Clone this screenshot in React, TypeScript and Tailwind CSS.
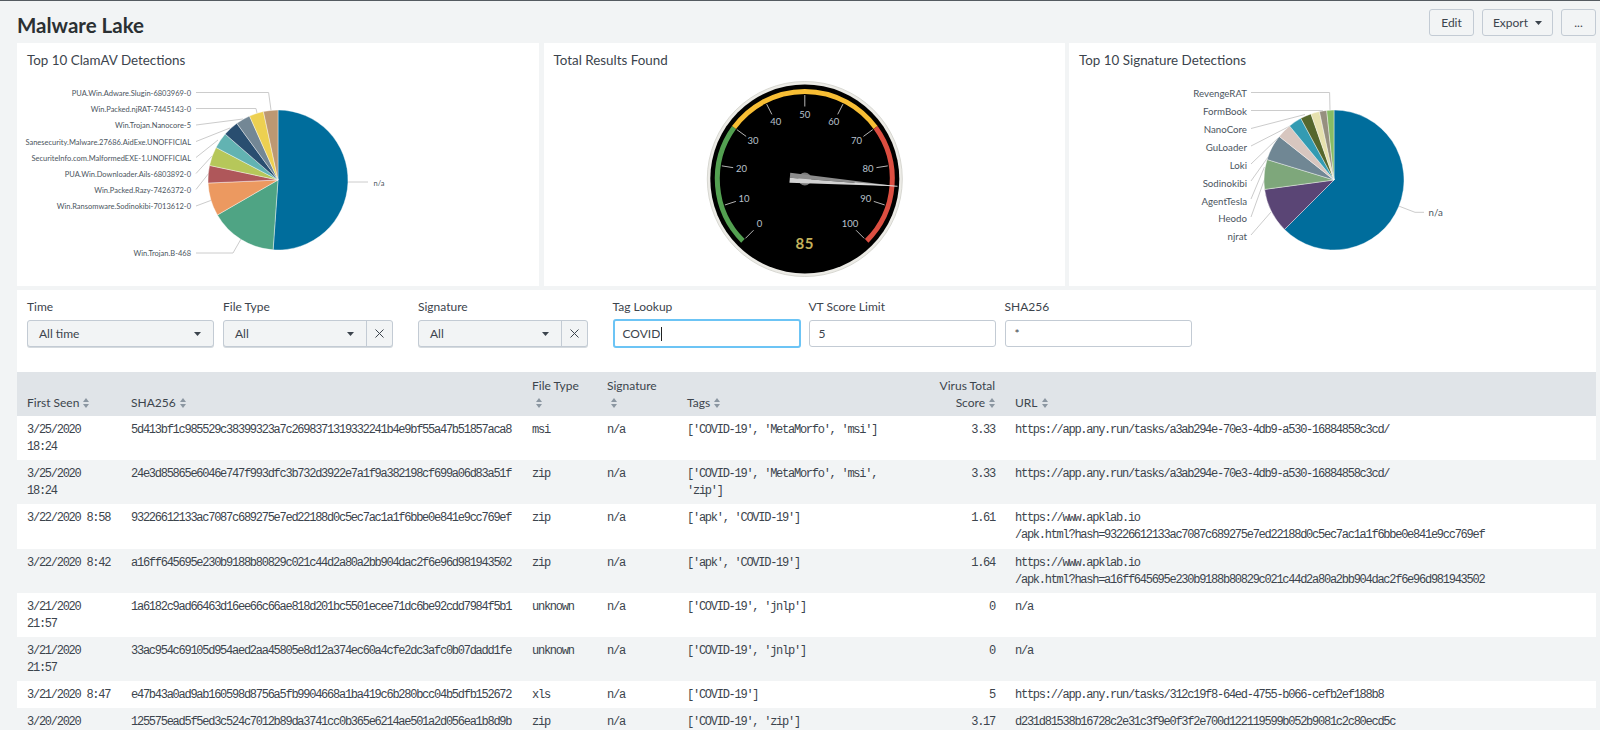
import { X } from "lucide-react";

const clamSlices = [
    { to: 184, color: "#006d9c" },
    { to: 240, color: "#4fa484" },
    { to: 267.5, color: "#ec9960" },
    { to: 282, color: "#af575a" },
    { to: 297.7, color: "#b6c75a" },
    { to: 311, color: "#62b3b2" },
    { to: 324, color: "#294e70" },
    { to: 336, color: "#738795" },
    { to: 348, color: "#edd051" },
    { to: 360, color: "#bd9872" },
];

const clamLabels = [
    { text: "PUA.Win.Adware.Slugin-6803969-0", y: 93, line: "196,92.5 268.6,92.5 271,110" },
    { text: "Win.Packed.njRAT-7445143-0", y: 109, line: "196,108.5 256,108.5 257,113" },
    { text: "Win.Trojan.Nanocore-5", y: 125.5, line: "196,125 243,119" },
    { text: "Sanesecurity.Malware.27686.AidExe.UNOFFICIAL", y: 142, line: "196,141.5 230,128" },
    { text: "SecuriteInfo.com.MalformedEXE-1.UNOFFICIAL", y: 158, line: "196,157.5 218,140" },
    { text: "PUA.Win.Downloader.Ails-6803892-0", y: 174, line: "196,173.5 212,156" },
    { text: "Win.Packed.Razy-7426372-0", y: 190, line: "196,189.5 209,173" },
    { text: "Win.Ransomware.Sodinokibi-7013612-0", y: 206.5, line: "196,206 212,200" },
    { text: "Win.Trojan.B-468", y: 253.5, line: "196,253 233,253 241,239" },
];

const sigSlices = [
    { to: 225, color: "#006d9c" },
    { to: 262.3, color: "#5a4575" },
    { to: 287, color: "#7ea77b" },
    { to: 308.5, color: "#708794" },
    { to: 320.6, color: "#d7c6bf" },
    { to: 331.7, color: "#339bb2" },
    { to: 340.8, color: "#55672d" },
    { to: 348, color: "#e6e1ae" },
    { to: 354, color: "#96907f" },
    { to: 360, color: "#87bc65" },
];

const sigLabels = [
    { text: "RevengeRAT", y: 93.5, line: "1251,92.5 1329.6,92.5 1330,110" },
    { text: "FormBook", y: 112, line: "1251,110.5 1323,110.5" },
    { text: "NanoCore", y: 130, line: "1251,128.5 1305,114.5" },
    { text: "GuLoader", y: 148, line: "1251,146 1290,126" },
    { text: "Loki", y: 165.5, line: "1251,164 1278,138" },
    { text: "Sodinokibi", y: 183.5, line: "1251,181 1269.5,155" },
    { text: "AgentTesla", y: 201.5, line: "1251,199 1264.5,167" },
    { text: "Heodo", y: 219, line: "1251,217 1265,178" },
    { text: "njrat", y: 237, line: "1251,235 1271,212" },
];

const rows = [
    ["3/25/2020 18:24", "5d413bf1c985529c38399323a7c2698371319332241b4e9bf55a47b51857aca8", "msi", "n/a", "['COVID-19', 'MetaMorfo', 'msi']", "3.33", ["https://app.any.run/tasks/a3ab294e-70e3-4db9-a530-16884858c3cd/"]],
    ["3/25/2020 18:24", "24e3d85865e6046e747f993dfc3b732d3922e7a1f9a382198cf699a06d83a51f", "zip", "n/a", "['COVID-19', 'MetaMorfo', 'msi', 'zip']", "3.33", ["https://app.any.run/tasks/a3ab294e-70e3-4db9-a530-16884858c3cd/"]],
    ["3/22/2020 8:58", "93226612133ac7087c689275e7ed22188d0c5ec7ac1a1f6bbe0e841e9cc769ef", "zip", "n/a", "['apk', 'COVID-19']", "1.61", ["https://www.apklab.io", "/apk.html?hash=93226612133ac7087c689275e7ed22188d0c5ec7ac1a1f6bbe0e841e9cc769ef"]],
    ["3/22/2020 8:42", "a16ff645695e230b9188b80829c021c44d2a80a2bb904dac2f6e96d981943502", "zip", "n/a", "['apk', 'COVID-19']", "1.64", ["https://www.apklab.io", "/apk.html?hash=a16ff645695e230b9188b80829c021c44d2a80a2bb904dac2f6e96d981943502"]],
    ["3/21/2020 21:57", "1a6182c9ad66463d16ee66c66ae818d201bc5501ecee71dc6be92cdd7984f5b1", "unknown", "n/a", "['COVID-19', 'jnlp']", "0", ["n/a"]],
    ["3/21/2020 21:57", "33ac954c69105d954aed2aa45805e8d12a374ec60a4cfe2dc3afc0b07dadd1fe", "unknown", "n/a", "['COVID-19', 'jnlp']", "0", ["n/a"]],
    ["3/21/2020 8:47", "e47b43a0ad9ab160598d8756a5fb9904668a1ba419c6b280bcc04b5dfb152672", "xls", "n/a", "['COVID-19']", "5", ["https://app.any.run/tasks/312c19f8-64ed-4755-b066-cefb2ef188b8"]],
    ["3/20/2020", "125575ead5f5ed3c524c7012b89da3741cc0b365e6214ae501a2d056ea1b8d9b", "zip", "n/a", "['COVID-19', 'zip']", "3.17", ["d231d81538b16728c2e31c3f9e0f3f2e700d122119599b052b9081c2c80ecd5c"]],
] as const;

// degrees clockwise from 12 o'clock
const polar = (cx: number, cy: number, r: number, deg: number) => {
    const a = (deg * Math.PI) / 180;
    return [cx + r * Math.sin(a), cy - r * Math.cos(a)];
};

const arc = (cx: number, cy: number, r: number, from: number, to: number) => {
    const [x1, y1] = polar(cx, cy, r, from);
    const [x2, y2] = polar(cx, cy, r, to);
    return `M${x1} ${y1}A${r} ${r} 0 ${to - from > 180 ? 1 : 0} 1 ${x2} ${y2}`;
};

function Pie({ cx, cy, r, slices }: { cx: number; cy: number; r: number; slices: { to: number; color: string }[] }) {
    let from = 0;
    return (
        <>
            {slices.map(s => {
                const d = `M${cx} ${cy}L${arc(cx, cy, r, from, s.to).slice(1)}Z`;
                from = s.to;
                return <path key={s.color} d={d} fill={s.color} stroke="#fff" strokeWidth="0.4" />;
            })}
        </>
    );
}

function Labels({ items, x, size }: { items: { text: string; y: number; line: string }[]; x: number; size: number }) {
    return (
        <>
            {items.map(l => (
                <g key={l.text}>
                    <polyline points={l.line} fill="none" stroke="#cccccc" strokeWidth="1" />
                    <text x={x} y={l.y + 0.8} fontSize={size} fill="#4b5560" textAnchor="end" dominantBaseline="middle">
                        {l.text}
                    </text>
                </g>
            ))}
        </>
    );
}

function Gauge() {
    const cx = 804.8;
    const cy = 179;
    const values = [0, 10, 20, 30, 40, 50, 60, 70, 80, 90, 100];
    const toDeg = (v: number) => -135 + v * 2.7;
    return (
        <>
            <circle cx={cx} cy={cy} r="97.5" fill="#ecebe6" stroke="#d8d8d2" strokeWidth="1" />
            <circle cx={cx} cy={cy} r="94.5" fill="#000" />
            <path d={arc(cx, cy, 87.5, toDeg(0), toDeg(30))} fill="none" stroke="#53a051" strokeWidth="5" />
            <path d={arc(cx, cy, 87.5, toDeg(30), toDeg(70))} fill="none" stroke="#f8be34" strokeWidth="5" />
            <path d={arc(cx, cy, 87.5, toDeg(70), toDeg(100))} fill="none" stroke="#dc4e41" strokeWidth="5" />
            {values.map(v => {
                const [x1, y1] = polar(cx, cy, 84, toDeg(v));
                const [x2, y2] = polar(cx, cy, 72.5, toDeg(v));
                const [tx, ty] = polar(cx, cy, 64, toDeg(v));
                return (
                    <g key={v}>
                        <line x1={x1} y1={y1} x2={x2} y2={y2} stroke="#b4b4b4" strokeWidth="1" />
                        <text x={tx} y={ty + 0.5} fontSize="9.5" fill="#b9c2cc" textAnchor="middle" dominantBaseline="middle">
                            {v}
                        </text>
                    </g>
                );
            })}
            <text x={cx} y={245.5} fontSize="15" fontWeight="700" letterSpacing="0.6" fill="#c4b25c" textAnchor="middle" dominantBaseline="middle">
                85
            </text>
            <circle cx={cx} cy={cy} r="6.5" fill="#7a7a7a" />
            <g transform={`rotate(94.5 ${cx} ${cy})`}>
                <polygon points={`${cx},${cy - 93} ${cx - 5},${cy + 15} ${cx},${cy + 15}`} fill="#8c8c8c" />
                <polygon points={`${cx},${cy - 93} ${cx},${cy + 15} ${cx + 5},${cy + 15}`} fill="#d2d2d2" />
                <line x1={cx} y1={cy - 93} x2={cx} y2={cy - 50} stroke="#eeeeee" strokeWidth="0.8" />
            </g>
        </>
    );
}

function Panel({ title, children }: { title: string; children: React.ReactNode }) {
    return (
        <div className="h-[243px] bg-white">
            <h3 className="h-[32px] pl-[10px] pt-[7px] text-[13.4px] leading-[20px] font-normal text-[#3c444d]">{title}</h3>
            {children}
        </div>
    );
}

function Caret() {
    return (
        <svg width="7" height="4" viewBox="0 0 7 4" className="shrink-0">
            <polygon points="0,0 7,0 3.5,4" fill="#3c444d" />
        </svg>
    );
}

function Select({ value, width, clearable }: { value: string; width: string; clearable?: boolean }) {
    return (
        <div className={`flex h-[27px] ${width} rounded-[3px] border border-[#c3cbd4] bg-[#f2f4f5] text-[12px] text-[#3c444d] shadow-[0_1px_0_#d5dade]`}>
            <div className="flex min-w-0 flex-1 items-center justify-between pl-[11px] pr-[12px]">
                <span>{value}</span>
                <Caret />
            </div>
            {clearable && (
                <div className="flex w-[26px] items-center justify-center border-l border-[#c3cbd4]">
                    <X size={15} strokeWidth={1.6} />
                </div>
            )}
        </div>
    );
}

function Field({ label, className, children }: { label: string; className: string; children: React.ReactNode }) {
    return (
        <div className={className}>
            <div className="mb-[5px] h-[16px] text-[12px] leading-[16px] text-[#3c444d]">{label}</div>
            {children}
        </div>
    );
}

function SortIcon() {
    return (
        <svg width="6" height="10" viewBox="0 0 6 10" className="ml-[4px] inline-block align-[-1px]">
            <polygon points="3,0 6,4 0,4" fill="#8b96a1" />
            <polygon points="0,6 6,6 3,10" fill="#8b96a1" />
        </svg>
    );
}

function Th({ className, children }: { className?: string; children: React.ReactNode }) {
    return <th className={`px-[10px] pb-[5px] align-bottom text-left text-[12px] leading-[17px] font-normal text-[#3c444d] ${className ?? ""}`}>{children}</th>;
}

export default function App() {
    return (
        <div className="h-[730px] overflow-hidden border-t border-[#555b61] bg-[#f2f4f5] pl-[17px] pr-[4px] font-['Lato',sans-serif]">
            <div className="flex h-[42px] items-start justify-between">
                <h1 className="pt-[10px] text-[20.5px] leading-[28px] font-bold text-[#2b3033]">Malware Lake</h1>
                <div className="flex gap-[8px] pt-[8px] text-[12px] text-[#3c444d]">
                    <button className="h-[27px] w-[45px] rounded-[3px] border border-[#c3cbd4] bg-[#f2f4f5]">Edit</button>
                    <button className="flex h-[27px] w-[71px] items-center justify-center gap-[7px] rounded-[3px] border border-[#c3cbd4] bg-[#f2f4f5]">
                        Export
                        <Caret />
                    </button>
                    <button className="h-[27px] w-[35px] rounded-[3px] border border-[#c3cbd4] bg-[#f2f4f5]">...</button>
                </div>
            </div>

            <div className="grid grid-cols-[522px_521px_527px] gap-x-[4.5px]">
                <Panel title="Top 10 ClamAV Detections">
                    <svg width="522" height="211" viewBox="17 75 522 211" className="block">
                        <Labels items={clamLabels} x={191} size={7.5} />
                        <polyline points="348,182 368,182" fill="none" stroke="#cccccc" strokeWidth="1" />
                        <text x="373.5" y="184.5" fontSize="7.5" fill="#4b5560" dominantBaseline="middle">n/a</text>
                        <Pie cx={278} cy={180} r={70} slices={clamSlices} />
                    </svg>
                </Panel>
                <Panel title="Total Results Found">
                    <svg width="521" height="211" viewBox="544 75 521 211" className="block">
                        <Gauge />
                    </svg>
                </Panel>
                <Panel title="Top 10 Signature Detections">
                    <svg width="527" height="211" viewBox="1069 75 527 211" className="block">
                        <Labels items={sigLabels} x={1247} size={9.7} />
                        <polyline points="1398.6,206 1415,212.3 1424,212.3" fill="none" stroke="#cccccc" strokeWidth="1" />
                        <text x="1428.5" y="214" fontSize="9.7" fill="#4b5560" dominantBaseline="middle">n/a</text>
                        <Pie cx={1334} cy={180} r={70} slices={sigSlices} />
                    </svg>
                </Panel>
            </div>

            <div className="mt-[4px] flex h-[82px] bg-white pl-[10px] pt-[9px]">
                <Field label="Time" className="w-[187px]">
                    <Select value="All time" width="w-[187px]" />
                </Field>
                <Field label="File Type" className="ml-[9px] w-[170px]">
                    <Select value="All" width="w-[170px]" clearable />
                </Field>
                <Field label="Signature" className="ml-[25px] w-[170px]">
                    <Select value="All" width="w-[170px]" clearable />
                </Field>
                <Field label="Tag Lookup" className="ml-[24.5px] w-[188px]">
                    <div className="-mt-px flex h-[29px] items-center rounded-[3px] border-2 border-[#6cc4f5] bg-white pl-[8px] text-[12px] text-[#3c444d]">
                        COVID
                        <span className="ml-px h-[14px] w-px bg-[#222]" />
                    </div>
                </Field>
                <Field label="VT Score Limit" className="ml-[8px] w-[187px]">
                    <div className="flex h-[27px] items-center rounded-[3px] border border-[#c3cbd4] bg-white pl-[9px] text-[12px] text-[#3c444d]">5</div>
                </Field>
                <Field label="SHA256" className="ml-[9px] w-[187px]">
                    <div className="flex h-[27px] items-center rounded-[3px] border border-[#c3cbd4] bg-white pl-[9px] text-[12px] text-[#3c444d]">*</div>
                </Field>
            </div>

            <table className="w-[1579px] table-fixed border-collapse">
                <colgroup>
                    <col className="w-[104px]" />
                    <col className="w-[401px]" />
                    <col className="w-[75px]" />
                    <col className="w-[80px]" />
                    <col className="w-[250px]" />
                    <col className="w-[78px]" />
                    <col />
                </colgroup>
                <thead>
                    <tr className="h-[44px] bg-[#e0e4e8]">
                        <Th>First Seen<SortIcon /></Th>
                        <Th>SHA256<SortIcon /></Th>
                        <Th>File Type <SortIcon /></Th>
                        <Th>Signature <SortIcon /></Th>
                        <Th>Tags<SortIcon /></Th>
                        <Th className="text-right">Virus Total Score<SortIcon /></Th>
                        <Th>URL<SortIcon /></Th>
                    </tr>
                </thead>
                <tbody className="font-['Liberation_Mono',monospace] text-[12px] leading-[17.1px] tracking-[-1.26px] text-[#3c444d]">
                    {rows.map((r, i) => (
                        <tr key={r[1]} className={i % 2 === 0 ? "bg-white" : "bg-[#f2f4f5]"}>
                            <td className="px-[10px] pb-[4px] pt-[6px] align-top">{r[0]}</td>
                            <td className="px-[10px] pb-[4px] pt-[6px] align-top">{r[1]}</td>
                            <td className="px-[10px] pb-[4px] pt-[6px] align-top">{r[2]}</td>
                            <td className="px-[10px] pb-[4px] pt-[6px] align-top">{r[3]}</td>
                            <td className="px-[10px] pb-[4px] pt-[6px] align-top">{r[4]}</td>
                            <td className="px-[10px] pb-[4px] pt-[6px] text-right align-top">{r[5]}</td>
                            <td className="px-[10px] pb-[4px] pt-[6px] align-top">
                                {r[6].map(line => (
                                    <div key={line}>{line}</div>
                                ))}
                            </td>
                        </tr>
                    ))}
                </tbody>
            </table>
        </div>
    );
}
